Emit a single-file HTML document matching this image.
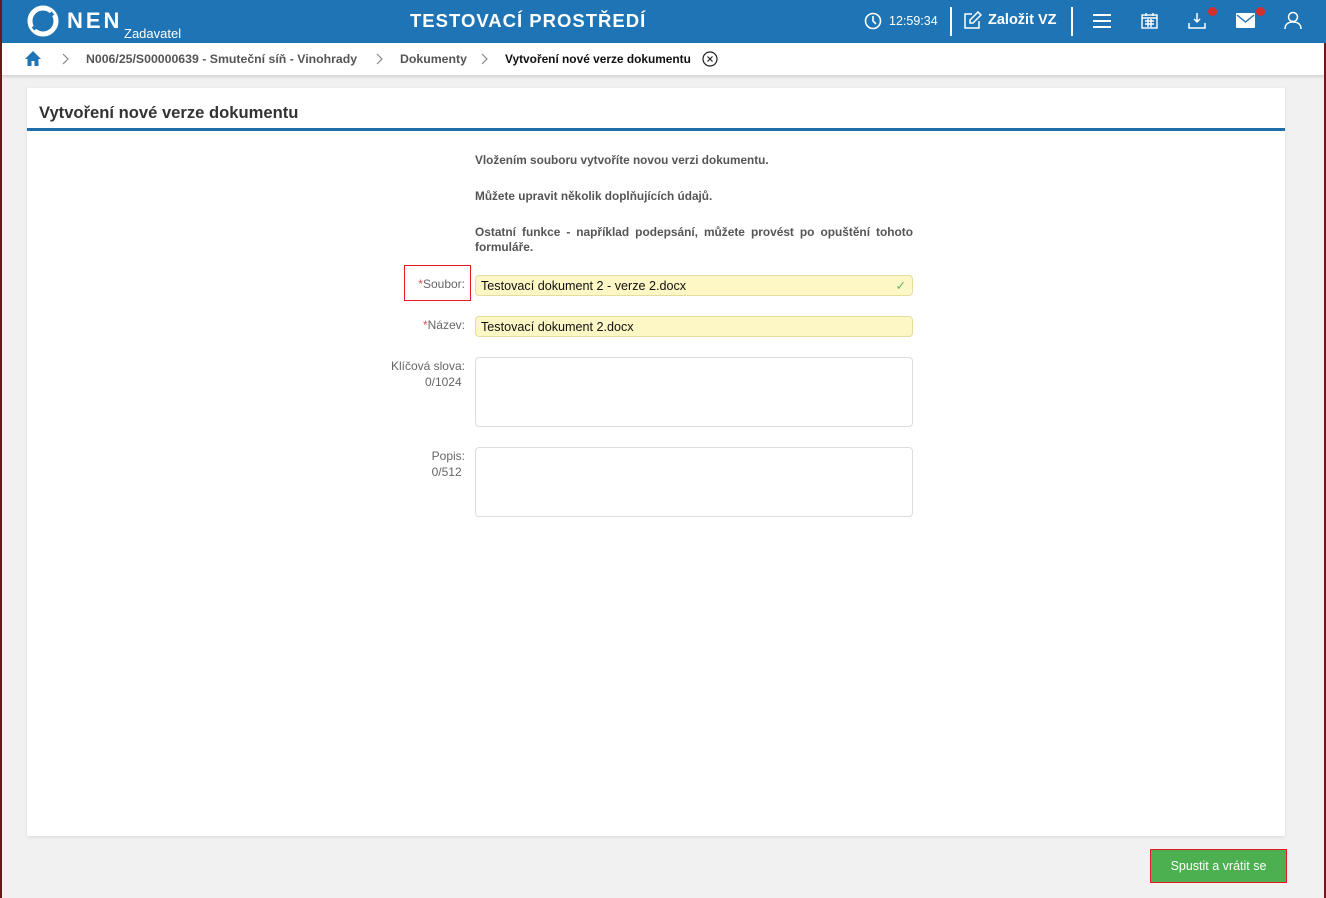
<!DOCTYPE html>
<html style="overflow:hidden;height:898px"><head><meta charset="utf-8"><style>
*{box-sizing:border-box;margin:0;padding:0}
body{width:1326px;height:898px;background:#f1f1f1;font-family:"Liberation Sans",sans-serif;position:relative;overflow:hidden}
.edge{position:absolute;top:0;width:2px;height:898px;background:#6b1a1a;z-index:5}
.top{position:absolute;left:0;top:0;width:1326px;height:43px;background:#1e74b4;color:#fff}
.bc{position:absolute;left:0;top:43px;width:1326px;height:32px;background:#fff;box-shadow:0 2px 3px rgba(0,0,0,.12);font-size:12.3px;font-weight:bold;color:#555}
.bc span{position:absolute;top:9px;white-space:nowrap}
.card{position:absolute;left:27px;top:88px;width:1258px;height:748px;background:#fff;box-shadow:0 1px 3px rgba(0,0,0,.1)}
.card h1{font-size:16.6px;color:#333;padding:15px 0 0 12px;height:43px;border-bottom:3px solid #1e6fa9}
.t{position:absolute;font-size:11.8px;font-weight:bold;color:#555}
.lbl{position:absolute;font-size:12px;color:#666;text-align:right;width:100px}
.lbl b{color:#e05050;font-weight:normal}
.inp{position:absolute;left:448px;width:438px;border:1px solid #ddd;border-radius:4px}
.y{background:#fcf7c4;border-color:#e6dca0;height:21px;font-size:12.6px;color:#111;padding:3px 5px}
.btn{position:absolute;left:1150px;top:849px;width:137px;height:34px;border:1px solid #e31b23;background:#4caf50;color:#fff;font-size:12.5px;text-align:center;line-height:32px}
</style></head><body>
<div class="edge" style="left:0"></div><div class="edge" style="left:1324px;top:43px;height:855px"></div>
<div class="top">
<svg style="position:absolute;left:27px;top:5px" width="32" height="32" viewBox="0 0 32 32"><circle cx="16" cy="16" r="13" fill="none" stroke="#fff" stroke-width="5"/><path d="M6 24 L26 8" stroke="#1e74b4" stroke-width="4"/></svg>
<div style="position:absolute;left:67px;top:8px;font-size:22px;font-weight:bold;letter-spacing:3px">NEN</div>
<div style="position:absolute;left:124px;top:26px;font-size:13px">Zadavatel</div>
<div style="position:absolute;left:410px;top:10px;font-size:18.5px;font-weight:bold;letter-spacing:1px">TESTOVACÍ PROSTŘEDÍ</div>
<svg style="position:absolute;left:864px;top:12px" width="18" height="18" viewBox="0 0 18 18" fill="none" stroke="#fff" stroke-width="1.6"><circle cx="9" cy="9" r="7.5"/><path d="M9 4v5l3 3"/></svg>
<div style="position:absolute;left:889px;top:14px;font-size:12.5px">12:59:34</div>
<div style="position:absolute;left:950px;top:7px;width:2px;height:29px;background:#fff"></div>
<svg style="position:absolute;left:963px;top:11px" width="19" height="19" viewBox="0 0 19 19" fill="none" stroke="#fff" stroke-width="1.5"><path d="M9 3H2v14h14v-7"/><path d="M15 1l3 3-8 8H7V9z"/></svg>
<div style="position:absolute;left:988px;top:12px;font-size:14.5px;font-weight:bold">Založit VZ</div>
<div style="position:absolute;left:1071px;top:7px;width:2px;height:29px;background:#fff"></div>
<svg style="position:absolute;left:1093px;top:13px" width="18" height="16"><rect y="1" width="18" height="2" fill="#fff"/><rect y="7" width="18" height="2" fill="#fff"/><rect y="13" width="18" height="2" fill="#fff"/></svg>
<svg style="position:absolute;left:1141px;top:12px" width="17" height="17" viewBox="0 0 17 17" fill="none" stroke="#fff" stroke-width="1.4"><rect x="1" y="3" width="15" height="13"/><path d="M1 6h15M5 1v3M12 1v3M4 9h9M4 12h9M7 7v8M10 7v8"/></svg>
<svg style="position:absolute;left:1188px;top:12px" width="18" height="18" viewBox="0 0 18 18" fill="none" stroke="#fff" stroke-width="1.5"><path d="M9 1v9M6 7l3 3 3-3M1 11v5h16v-5"/></svg>
<div style="position:absolute;left:1208px;top:7px;width:9px;height:9px;border-radius:50%;background:#d32f2f"></div>
<svg style="position:absolute;left:1236px;top:13px" width="19" height="15" viewBox="0 0 19 15"><rect width="19" height="15" rx="1" fill="#fff"/><path d="M1 2l8.5 7L18 2" fill="none" stroke="#1e74b4" stroke-width="1.4"/></svg>
<div style="position:absolute;left:1256px;top:7px;width:9px;height:9px;border-radius:50%;background:#d32f2f"></div>
<svg style="position:absolute;left:1284px;top:11px" width="18" height="19" viewBox="0 0 18 19" fill="none" stroke="#fff" stroke-width="1.5"><circle cx="9" cy="6" r="4.5"/><path d="M1 18c0-5 3.5-7 8-7s8 2 8 7"/></svg>
</div>
<div class="bc">
<svg style="position:absolute;left:24px;top:7px" width="18" height="17" viewBox="0 0 18 17"><path d="M9 1L1 9h2.5v7h4v-5h3v5h4V9H17z" fill="#1e74b4"/></svg>
<svg style="position:absolute;left:62px;top:10px" width="8" height="12" fill="none" stroke="#888" stroke-width="1.2"><path d="M1 1l5 5-5 5"/></svg>
<span style="left:86px">N006/25/S00000639 - Smuteční síň - Vinohrady</span>
<svg style="position:absolute;left:376px;top:10px" width="8" height="12" fill="none" stroke="#888" stroke-width="1.2"><path d="M1 1l5 5-5 5"/></svg>
<span style="left:400px">Dokumenty</span>
<svg style="position:absolute;left:481px;top:10px" width="8" height="12" fill="none" stroke="#888" stroke-width="1.2"><path d="M1 1l5 5-5 5"/></svg>
<span style="left:505px;color:#111;font-size:11.9px;top:9px">Vytvoření nové verze dokumentu</span>
<svg style="position:absolute;left:702px;top:8px" width="16" height="16" viewBox="0 0 16 16" fill="none" stroke="#222" stroke-width="1.2"><circle cx="8" cy="8" r="7"/><path d="M5.5 5.5l5 5M10.5 5.5l-5 5"/></svg>
</div>
<div class="card">
<h1>Vytvoření nové verze dokumentu</h1>
<div class="t" style="left:448px;top:65px">Vložením souboru vytvoříte novou verzi dokumentu.</div>
<div class="t" style="left:448px;top:101px">Můžete upravit několik doplňujících údajů.</div>
<div class="t" style="left:448px;top:137px;width:438px;text-align:justify;line-height:15px;font-size:11.9px">Ostatní funkce - například podepsání, můžete provést po opuštění tohoto formuláře.</div>
<div style="position:absolute;left:377px;top:177px;width:67px;height:36px;border:1px solid #e31b23"></div>
<div class="lbl" style="left:338px;top:189px"><b>*</b>Soubor:</div>
<div class="inp y" style="top:187px">Testovací dokument 2 - verze 2.docx<span style="position:absolute;right:6px;top:2px;color:#6bb36b">✓</span></div>
<div class="lbl" style="left:338px;top:230px"><b>*</b>Název:</div>
<div class="inp y" style="top:228px">Testovací dokument 2.docx</div>
<div class="lbl" style="left:338px;top:270px;line-height:16px">Klíčová slova:<br>0/1024&nbsp;</div>
<div class="inp" style="top:269px;height:70px"></div>
<div class="lbl" style="left:338px;top:360px;line-height:16px">Popis:<br>0/512&nbsp;</div>
<div class="inp" style="top:359px;height:70px"></div>
</div>
<div class="btn">Spustit a vrátit se</div>
</body></html>
